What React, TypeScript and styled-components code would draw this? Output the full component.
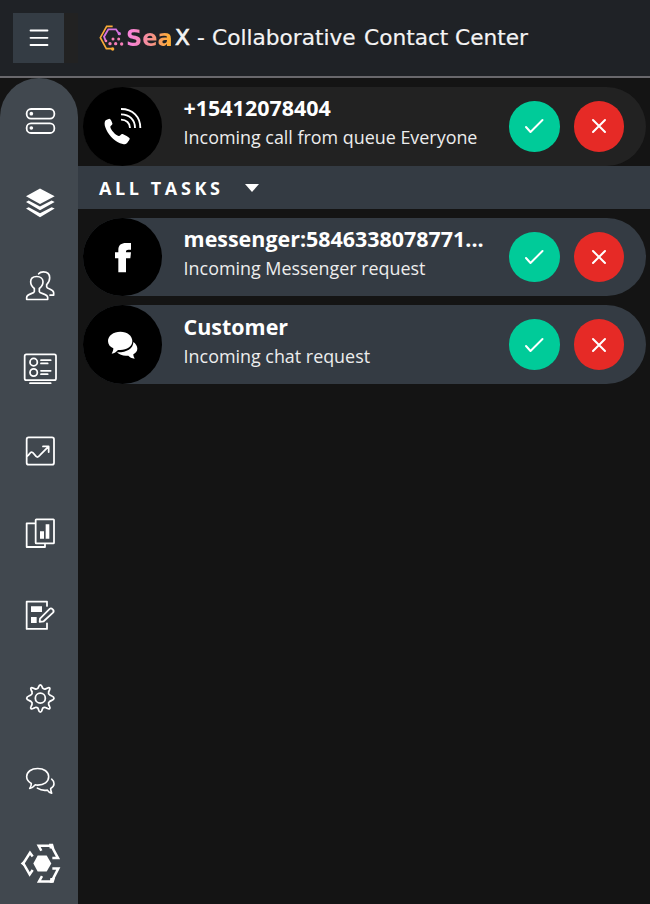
import React from "react";
import styled, { createGlobalStyle } from "styled-components";

const GlobalStyle = createGlobalStyle`
  * { box-sizing: border-box; }
  body { margin: 0; background: #141414; font-family: "Open Sans", sans-serif; color: #fff; }
  button { border: 0; padding: 0; color: inherit; font: inherit; cursor: pointer; }
  svg { display: block; }
`;

const Page = styled.div`
  height: 904px;
  display: flex;
  flex-direction: column;
  overflow: hidden;
`;

const Header = styled.header`
  height: 78px;
  flex: none;
  display: flex;
  align-items: center;
  padding: 0 0 1px 13px;
  background: #1f2226;
  border-bottom: 2px solid #69686c;
`;

const MenuShadow = styled.div`
  width: 65px;
  height: 50px;
  flex: none;
  background: #222222;
`;

const MenuButton = styled.button`
  width: 51px;
  height: 50px;
  display: flex;
  align-items: center;
  justify-content: center;
  background: #343c44;
`;

const Brand = styled.h1`
  display: flex;
  align-items: center;
  margin: 0 0 0 21px;
  font: 400 21.7px/30px "DejaVu Sans", sans-serif;
  white-space: pre;
`;

const BrandWord = styled.span<{ $width: number; $gap?: number; $stroke?: number }>`
  width: ${(p) => p.$width}px;
  margin-left: ${(p) => p.$gap ?? 0}px;
  padding-top: 1px;
  -webkit-text-stroke: ${(p) => p.$stroke ?? 0.2}px currentColor;
  color: #f4f4f4;
`;

const GradientWord = styled(BrandWord)`
  font-size: 22.5px;
  font-weight: 700;
  color: transparent;
  -webkit-text-stroke: 0;
  background: linear-gradient(90deg, #f783d8 10%, #f58f91 50%, #ffad35 90%);
  background-clip: text;
`;

const Body = styled.div`
  flex: 1;
  display: flex;
  min-height: 0;
`;

const Sidebar = styled.nav`
  width: 78px;
  flex: none;
  display: flex;
  flex-direction: column;
  padding-top: 1.8px;
  background: #41484f;
  border-radius: 39px 39px 0 0;
`;

const NavItem = styled.a`
  height: 82.4px;
  flex: none;
  display: flex;
  align-items: center;
  justify-content: center;
`;

const LineIcon = styled.svg`
  width: 48px;
  height: 48px;
  fill: none;
  stroke: #fff;
  stroke-width: 5.3;
  stroke-linecap: round;
  stroke-linejoin: round;
  .solid { fill: #fff; stroke: none; }
`;

const Main = styled.main`
  flex: 1;
  min-width: 0;
  padding-top: 9px;
`;

const Row = styled.article<{ $active?: boolean }>`
  height: 78.67px;
  margin: 0 4px 0 5px;
  display: flex;
  align-items: center;
  padding-right: 22px;
  border-radius: 40px;
  background: ${(p) => (p.$active ? "#222222" : "#343b43")};
`;

const Avatar = styled.div`
  width: 79px;
  height: 100%;
  flex: none;
  border-radius: 50%;
  background: #000;
`;

const AvatarIcon = styled.svg`
  width: 79px;
  height: 79px;
  fill: #fff;
`;

const Info = styled.div`
  width: 304px;
  margin-left: 21.6px;
  align-self: flex-start;
  padding-top: 6.4px;
`;

const Name = styled.div`
  font-size: 21.45px;
  line-height: 29px;
  font-weight: 700;
  white-space: nowrap;
`;

const Detail = styled.div`
  font-size: 17.9px;
  line-height: 31px;
  color: #ededed;
  white-space: nowrap;
`;

const Actions = styled.div`
  display: flex;
  gap: 14px;
  margin-left: auto;
`;

const RoundButton = styled.button<{ $tone: "accept" | "reject" }>`
  width: 50.5px;
  height: 50.5px;
  border-radius: 50%;
  display: flex;
  align-items: center;
  justify-content: center;
  background: ${(p) => (p.$tone === "accept" ? "#00cb99" : "#e62a26")};
`;

const ActionIcon = styled.svg`
  width: 24px;
  height: 24px;
  fill: none;
  stroke: #fff;
  stroke-width: 2;
  stroke-linecap: round;
  stroke-linejoin: round;
`;

const TasksBar = styled.button`
  width: 100%;
  height: 43.33px;
  display: flex;
  align-items: center;
  padding: 2px 0 0 21px;
  background: #343b43;
`;

const TasksLabel = styled.span`
  width: 146px;
  text-align: left;
  font-size: 18px;
  font-weight: 700;
  letter-spacing: 3.6px;
  line-height: 25px;
`;

const RowList = styled.section`
  display: flex;
  flex-direction: column;
  gap: 9px;
  margin-top: 8.67px;
`;

const navIcons = [
  {
    label: "Switches",
    viewBox: "45 81 144 144",
    art: (
      <>
        <rect x="80" y="117" width="83" height="29" rx="13" />
        <rect x="80" y="160" width="83" height="29" rx="13" />
        <circle className="solid" cx="94" cy="131" r="5.500" />
        <circle className="solid" cx="94" cy="174" r="5.500" />
      </>
    ),
  },
  {
    label: "Tasks",
    viewBox: "45 328.2 144 144",
    art: (
      <g className="solid">
        <path d="M120 357l44 23-44 23.500-42-23.500z" />
        <path d="M78 397l8-4 34 18 35-18 9 4-44 25z" />
        <path d="M78 417l8-4 34 18 35-18 9 4-44 26z" />
      </g>
    ),
  },
  {
    label: "Contacts",
    viewBox: "45 575.4 144 144",
    art: (
      <g strokeWidth="5">
        <path d="M103 655c-7-5-11-12-11-20 0-9 6-16 18-16s19 7 19 16c0 8-4 15-11 20v9c1 7 25 6 25 18v6H80v-6c0-12 22-11 23-18z" />
        <path d="M116 611c3-4 8-6 14-6 12 0 19 7 19 18 0 8-3 15-9 20v7c1 7 21 7 21 18v7h-11" />
      </g>
    ),
  },
  {
    label: "Directory",
    viewBox: "45 42.6 144 144",
    art: (
      <>
        <rect x="74" y="74" width="94" height="77" rx="5" />
        <circle cx="101" cy="97" r="11" />
        <circle cx="101" cy="128" r="11" />
        <path d="M123 91h29M123 101h20M123 123h29M123 133h20M90 160h62" />
      </>
    ),
  },
  {
    label: "Analytics",
    viewBox: "45 289.8 144 144",
    art: (
      <>
        <rect x="80" y="321" width="82" height="82" rx="6" />
        <path d="M81 377c8-3 8-12 14-12 7 0 10 15 17 15 5 0 7-5 10-8l24-24M129 348h17v17" />
      </>
    ),
  },
  {
    label: "Reports",
    viewBox: "45 537 144 144",
    art: (
      <>
        <rect x="107" y="568" width="55" height="72" rx="2" />
        <path d="M104 580H80v71h55v-8" />
        <path className="solid" d="M120 604h12v22h-12zM137 583h11v43h-11z" />
      </>
    ),
  },
  {
    label: "Forms",
    viewBox: "45 34.2 144 144",
    art: (
      <>
        <path d="M141 79V66H80v82h61v-17" />
        <path d="M120 117l29-29c5-5 16 4 10 11l-28 26-12 2z" />
        <path className="solid" d="M93 80h33v17H93zM93 112h17v18H93z" />
      </>
    ),
  },
  {
    label: "Settings",
    viewBox: "45 281.4 144 144",
    art: (
      <>
        <circle cx="121" cy="354" r="15" />
        <path d="M114 324c2-3 2-10 7-10s5 7 7 10c2 2 6 3 9 2 4-1 9-6 12-3s-2 8-3 12c-1 3 0 7 3 9 3 3 13 4 13 10s-10 7-13 10c-3 2-4 6-3 9 1 4 6 9 3 12s-8-2-12-3c-3-1-7 0-9 2-2 3-2 12-7 12s-5-9-7-12c-2-2-6-3-9-2-4 1-9 6-12 3s2-8 3-12c1-3 0-7-3-9-3-3-13-4-13-10s10-7 13-10c3-2 4-6 3-9-1-4-6-9-3-12s8 2 12 3c3 1 7 0 9-2z" />
      </>
    ),
  },
  {
    label: "Messages",
    viewBox: "45 48.6 144 144",
    art: (
      <g strokeWidth="4.800">
        <path d="M94 131c-9-5-14-11-14-20 0-15 14-25 33-25s33 10 33 25-14 25-33 25c-3 0-5 0-7-1-5 6-10 10-17 11 4-5 5-10 5-15z" />
        <path d="M155 118c5 4 7 9 7 14 0 6-4 11-10 14 0 6 2 10 3 14-6-1-10-4-13-9-12 2-22-1-30-6" />
      </g>
    ),
  },
  {
    label: "Platform",
    viewBox: "45 295.8 144 144",
    art: (
      <g strokeLinecap="butt" strokeLinejoin="miter">
        <path className="solid" d="M113 345h27l14 24-14 24h-27l-13-24z" />
        <path strokeWidth="7.500" d="M98 348l-8-11-20 32 19 33 9-13M124 331l-8-15h38l20 37h-17M157 384h18l-20 39h-38l9-16" />
        <path className="solid" d="M62 369l12-10v20zM147 310h12l4 14h-14zM149 427h12l4-14h-14z" />
      </g>
    ),
  },
];

const PhoneIcon = () => (
  <AvatarIcon viewBox="39 36 237 237">
    <path d="M107 136c3-2 7-4 11-5 4 0 7 8 9 14 2 5-6 7-6 11 1 9 16 25 25 27 5 1 7-8 12-6 7 3 18 9 21 13 1 3-4 10-7 13-6 6-14 5-22 2-20-9-37-27-44-48-3-8-3-17 1-21z" />
    <path
      d="M153 134c16 0 27 10 27 25M153 118c26 0 42 17 42 41M153 102c36 0 58 24 58 57"
      fill="none" stroke="#fff" strokeWidth="5.500"
    />
  </AvatarIcon>
);

const FacebookIcon = () => (
  <AvatarIcon viewBox="39 38 237 237">
    <path d="M145 201v-42h-10v-18h10v-8c0-14 9-20 23-20h15v20h-8c-5 0-7 2-7 6v2h15l-2 18h-13v42z" />
  </AvatarIcon>
);

const ChatIcon = () => (
  <AvatarIcon viewBox="39 301 237 237">
    <path d="M130 431c-10-4-16-12-16-22 0-16 16-28 37-28s36 12 36 28-16 27-36 27h-7c-5 6-11 10-19 11 3-5 5-10 5-16z" />
    <path d="M190 412c7 5 12 12 12 20 0 7-5 13-12 17 0 6 2 9 4 13-9-1-15-5-19-9-14 2-26-2-34-10 27 1 49-10 49-31z" />
  </AvatarIcon>
);

const BrandMark = () => (
  <svg width="26" height="26" viewBox="297 73 78 78" fill="none">
    <path d="M338 77h-18l-19 34 18 33h18" stroke="#f9ab38" strokeWidth="5" />
    <circle cx="338" cy="145" r="5" fill="#f9ab38" />
    <path d="M318 123l-6-15 13-22h23l9 13" stroke="#d673e0" strokeWidth="5.500" />
    <circle cx="358" cy="99" r="5" fill="#d673e0" />
    <g fill="#f77fb8">
      <circle cx="318" cy="121" r="4" /><circle cx="339" cy="115" r="4.500" /><circle cx="356" cy="115" r="4.500" />
      <circle cx="330" cy="129" r="5" /><circle cx="347" cy="129" r="5" /><circle cx="365" cy="130" r="5" />
    </g>
  </svg>
);

interface Task {
  name: string;
  detail: string;
  icon: React.ReactNode;
  active?: boolean;
}

const TaskRow = ({ name, detail, icon, active }: Task) => (
  <Row $active={active}>
    <Avatar>{icon}</Avatar>
    <Info>
      <Name>{name}</Name>
      <Detail>{detail}</Detail>
    </Info>
    <Actions>
      <RoundButton $tone="accept" aria-label="Accept">
        <ActionIcon viewBox="0 0 24 24"><path d="M4 13l4.500 5L20.500 6" /></ActionIcon>
      </RoundButton>
      <RoundButton $tone="reject" aria-label="Reject">
        <ActionIcon viewBox="0 0 24 24"><path d="M6 6l12 12M18 6L6 18" /></ActionIcon>
      </RoundButton>
    </Actions>
  </Row>
);

export default function App() {
  return (
    <Page>
      <GlobalStyle />
      <Header>
        <MenuShadow>
          <MenuButton aria-label="Menu">
            <svg width="20" height="18" viewBox="0 0 20 18" stroke="#fff" strokeWidth="1.8" strokeLinecap="round">
              <path d="M1.500 1.500h17M1.500 8.800h17M1.500 16h17" />
            </svg>
          </MenuButton>
        </MenuShadow>
        <Brand>
          <BrandMark />
          <GradientWord $width={48} $gap={1}>Sea</GradientWord>
          <BrandWord $width={16} $gap={1} $stroke={0.7}>X</BrandWord>
          <BrandWord $width={10} $gap={6}>-</BrandWord>
          <BrandWord $width={147} $gap={5}>Collaborative</BrandWord>
          <BrandWord $width={85} $gap={5}>Contact</BrandWord>
          <BrandWord $width={74} $gap={6}>Center</BrandWord>
        </Brand>
      </Header>
      <Body>
        <Sidebar>
          {navIcons.map((item) => (
            <NavItem key={item.label} aria-label={item.label}>
              <LineIcon viewBox={item.viewBox}>{item.art}</LineIcon>
            </NavItem>
          ))}
        </Sidebar>
        <Main>
          <TaskRow active name="+15412078404" detail="Incoming call from queue Everyone" icon={<PhoneIcon />} />
          <TasksBar>
            <TasksLabel>ALL TASKS</TasksLabel>
            <svg width="14" height="8" viewBox="0 0 14 8" fill="#fff"><path d="M0 0h14L7 8z" /></svg>
          </TasksBar>
          <RowList>
            <TaskRow name="messenger:5846338078771..." detail="Incoming Messenger request" icon={<FacebookIcon />} />
            <TaskRow name="Customer" detail="Incoming chat request" icon={<ChatIcon />} />
          </RowList>
        </Main>
      </Body>
    </Page>
  );
}
